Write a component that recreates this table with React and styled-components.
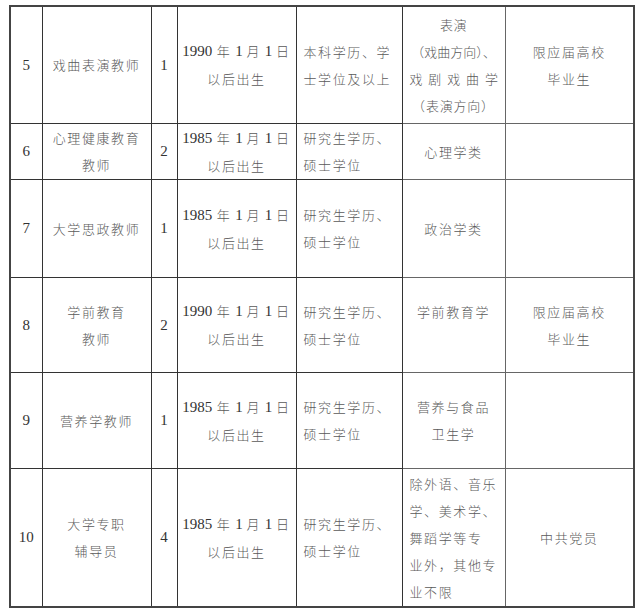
import React from 'react'
import styled, { createGlobalStyle } from 'styled-components'

const GlobalStyle = createGlobalStyle`
  html, body {
    margin: 0;
    padding: 0;
    background: #fff;
  }
  body {
    font-family: "Liberation Serif", "Noto Sans CJK SC", serif;
  }
`

const Page = styled.div`
  width: 640px;
  height: 614px;
  padding: 5px 0 0 9px;
  box-sizing: border-box;
  background: #fff;
`

const Table = styled.table`
  width: 624px;
  border-collapse: collapse;
  table-layout: fixed;
  border: 2px solid #444;
`

const Row = styled.tr`
  height: ${(p) => p.h}px;
`

const Cell = styled.td`
  border: 1.5px solid ${(p) => (p.soft ? '#666' : '#333')};
  padding: 0 ${(p) => (p.left ? '0 0 7px' : '0')};
  padding-left: ${(p) => (p.left ? '7px' : '0')};
  text-align: ${(p) => (p.left ? 'left' : 'center')};
  vertical-align: middle;
  color: #5a5a5a;
  font-family: "Noto Sans CJK SC", sans-serif;
  font-weight: 300;
  font-size: 13px;
  letter-spacing: ${(p) => (p.tight ? '0.5px' : '1.6px')};
  line-height: 27px;
  white-space: nowrap;
  overflow: hidden;
`

const Num = styled.span`
  font-family: "Liberation Serif", serif;
  font-weight: 400;
  font-size: 15px;
  color: #333;
  letter-spacing: 0;
`

const Line = styled.div`
  min-height: 27px;
`

const Spread = styled.div`
  display: flex;
  justify-content: space-between;
  padding: 0 6px 0 7px;
`

const DateText = ({ year }) => (
  <>
    <Line>
      <Num>{year}</Num> 年<Num> 1 </Num>月<Num> 1 </Num>日
    </Line>
    <Line>以后出生</Line>
  </>
)

const Lines = ({ items }) => items.map((t, i) => <Line key={i}>{t || '\u00a0'}</Line>)

const Degree = ({ lines }) => <Lines items={lines} />

const rows = [
  {
    h: 117,
    no: '5',
    post: ['戏曲表演教师'],
    count: '1',
    year: '1990',
    degree: ['本科学历、学', '士学位及以上'],
    major: 'opera',
    note: ['限应届高校', '毕业生'],
  },
  {
    h: 56,
    no: '6',
    post: ['心理健康教育', '教师'],
    count: '2',
    year: '1985',
    degree: ['研究生学历、', '硕士学位'],
    major: ['心理学类'],
    note: [],
  },
  {
    h: 98,
    no: '7',
    post: ['大学思政教师'],
    count: '1',
    year: '1985',
    degree: ['研究生学历、', '硕士学位'],
    major: ['政治学类'],
    note: [],
  },
  {
    h: 95,
    no: '8',
    post: ['学前教育', '教师'],
    count: '2',
    year: '1990',
    degree: ['研究生学历、', '硕士学位'],
    major: ['学前教育学', ''],
    note: ['限应届高校', '毕业生'],
  },
  {
    h: 96,
    no: '9',
    post: ['营养学教师'],
    count: '1',
    year: '1985',
    degree: ['研究生学历、', '硕士学位'],
    major: ['营养与食品', '卫生学'],
    note: [],
  },
  {
    h: 139,
    no: '10',
    post: ['大学专职', '辅导员'],
    count: '4',
    year: '1985',
    degree: ['研究生学历、', '硕士学位'],
    major: 'free',
    note: ['中共党员'],
  },
]

function Major({ major }) {
  if (major === 'opera') {
    return (
      <>
        <Line>表演</Line>
        <Line style={{ letterSpacing: 0 }}>（戏曲方向）、</Line>
        <Spread>
          {'戏剧戏曲学'.split('').map((c, i) => (
            <span key={i}>{c}</span>
          ))}
        </Spread>
        <Line style={{ letterSpacing: '0.8px' }}>（表演方向）</Line>
      </>
    )
  }
  return <Lines items={major} />
}

export default function App() {
  return (
    <Page>
      <GlobalStyle />
      <Table>
        <colgroup>
          <col style={{ width: 32 }} />
          <col style={{ width: 109 }} />
          <col style={{ width: 26 }} />
          <col style={{ width: 119 }} />
          <col style={{ width: 106 }} />
          <col style={{ width: 103 }} />
          <col style={{ width: 129 }} />
        </colgroup>
        <tbody>
          {rows.map((r) => (
            <Row key={r.no} h={r.h}>
              <Cell>
                <Num>{r.no}</Num>
              </Cell>
              <Cell>
                <Lines items={r.post} />
              </Cell>
              <Cell>
                <Num>{r.count}</Num>
              </Cell>
              <Cell>
                <DateText year={r.year} />
              </Cell>
              <Cell left>
                <Degree lines={r.degree} />
              </Cell>
              <Cell left={r.major === 'free'} tight={r.major === 'opera'} soft>
                {r.major === 'free' ? (
                  <Lines items={['除外语、音乐', '学、美术学、', '舞蹈学等专', '业外，其他专', '业不限']} />
                ) : (
                  <Major major={r.major} />
                )}
              </Cell>
              <Cell soft>
                <Lines items={r.note} />
              </Cell>
            </Row>
          ))}
        </tbody>
      </Table>
    </Page>
  )
}
